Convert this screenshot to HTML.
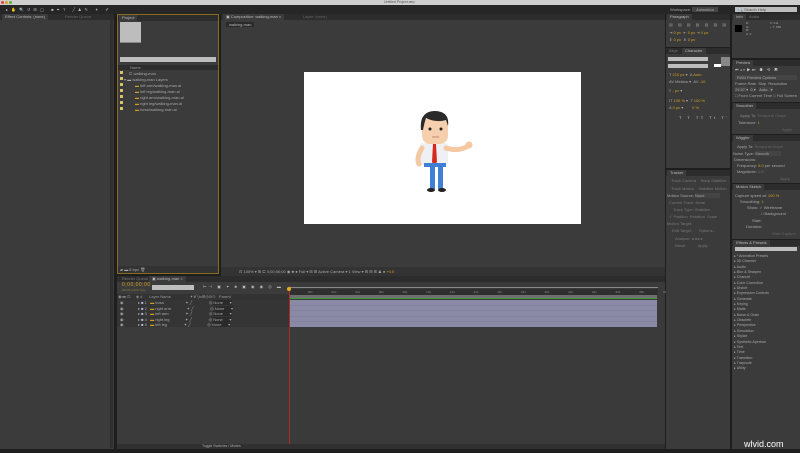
<!DOCTYPE html>
<html><head><meta charset="utf-8"><style>
*{margin:0;padding:0;box-sizing:border-box}
body{width:800px;height:453px;background:#1e1e1e;position:relative;overflow:hidden;font-family:"Liberation Sans",sans-serif;font-size:4px;color:#a8a8a8}
div{position:absolute}
.p{background:#3b3b3b}
.h{background:#2c2c2c;height:6px;left:0;right:0;top:0}
.tab{top:0;height:6px;background:#3b3b3b;padding:1px 3px;color:#bbb;white-space:nowrap;line-height:4px}
.t{white-space:nowrap;line-height:5px}
.row{left:0;right:0;height:5px;line-height:5px;white-space:nowrap}
.y{color:#d4a020}
.bar{background:#8a89a6}
</style></head><body>
<!-- title bar -->
<div style="left:0;top:0;width:800px;height:5px;background:#cfcfcf"></div>
<div style="left:1px;top:1px;width:3px;height:3px;border-radius:50%;background:#e0443e"></div>
<div style="left:5px;top:1px;width:3px;height:3px;border-radius:50%;background:#dea123"></div>
<div style="left:9px;top:1px;width:3px;height:3px;border-radius:50%;background:#5fb042"></div>
<div class="t" style="left:384px;top:0;color:#555;font-size:3.5px;line-height:5px">Untitled Project.aep</div>
<!-- toolbar -->
<div style="left:0;top:5px;width:800px;height:9px;background:#262626"></div>
<div class="t" style="left:6px;top:7px;color:#bbb;letter-spacing:3px;font-size:4px">▸✋🔍↺⊞◯ ■✒T ╱♟✎ ✦ ✐</div>
<div class="t" style="left:670px;top:7px">Workspace: <span style="background:#444;padding:0 4px">Animation</span></div>
<div style="left:735px;top:7px;width:62px;height:5px;background:#bdbdbd;color:#555;padding-left:3px;line-height:5px">🔍 Search Help</div>

<!-- Left: Effect Controls -->
<div class="p" style="left:0;top:14px;width:114px;height:435px">
 <div class="h"></div><div class="tab" style="left:2px">Effect Controls: (none)</div><div class="t" style="left:65px;top:0;color:#666">Render Queue</div>
 <div style="left:110px;top:6px;width:3px;height:428px;background:#2f2f2f"></div>
</div>
<!-- Project -->
<div class="p" style="left:117px;top:14px;width:102px;height:260px;border:1px solid #8a6d1c">
 <div class="h"></div><div class="tab" style="left:1px">Project</div>
 <div style="left:2px;top:7px;width:21px;height:21px;background:#bdbdbd;border-bottom:1px solid #888"></div>
 <div style="left:2px;top:42px;width:96px;height:5px;background:#bdbdbd"></div>
 <div style="left:0;top:50px;width:100px;height:5px;background:#2d2d2d;color:#999;padding-left:12px;line-height:5px">Name</div>
 <div class="row" style="top:56px;padding-left:11px">⊏ walking-man</div>
 <div class="row" style="top:62px;padding-left:6px">▾ ▬ walking-man Layers</div>
 <div class="row" style="top:68px;padding-left:17px"><span class="y">▬</span> left arm/walking-man.ai</div>
 <div class="row" style="top:74px;padding-left:17px"><span class="y">▬</span> left leg/walking-man.ai</div>
 <div class="row" style="top:80px;padding-left:17px"><span class="y">▬</span> right arm/walking-man.ai</div>
 <div class="row" style="top:86px;padding-left:17px"><span class="y">▬</span> right leg/walking-man.ai</div>
 <div class="row" style="top:92px;padding-left:17px"><span class="y">▬</span> torso/walking-man.ai</div>
 <div style="left:2px;top:56px;width:3px;height:40px;background:repeating-linear-gradient(#d9c26a 0 3px,transparent 3px 6px)"></div>
 <div style="left:0;top:251px;width:100px;height:7px;background:#333"></div>
 <div class="t" style="left:2px;top:252px">▰ ▬ 8 bpc 🗑</div>
</div>
<!-- Composition -->
<div class="p" style="left:221px;top:14px;width:444px;height:262px">
 <div class="h"></div><div class="tab" style="left:2px">▣ Composition: walking-man ×</div><div class="t" style="left:82px;top:0;color:#666">Layer: (none)</div>
 <div style="left:5px;top:8px;height:5px;background:#2a2a2a;padding:0 3px;line-height:5px;color:#bbb">walking-man</div>
 <div style="left:83px;top:58px;width:277px;height:152px;background:#fff"></div>
 <div style="left:0;top:253px;width:444px;height:9px;background:#333"></div>
 <div class="t" style="left:18px;top:255px">⊡ 100% ▾ ⊞ ⊏ 0;00;00;00 ◉ ♣ ● Full ▾ ⊞ ⊞ Active Camera ▾ 1 View ▾ ⊞ ⊞ ⊞ ♟ ● <span class="y">+0.0</span></div>
</div>
<!-- character -->
<svg style="position:absolute;left:410px;top:108px" width="70" height="88" viewBox="0 0 70 88">
 <rect x="10" y="35" width="28" height="22" rx="3" fill="#eef0f4"/>
 <polygon points="23,36 26,36 27,54 24,57 22,54" fill="#d42b1e"/>
 <path d="M36 40 Q48 44 58 38" stroke="#f4c8a3" stroke-width="5" fill="none" stroke-linecap="round"/>
 <circle cx="59" cy="37" r="3.5" fill="#f4c8a3"/>
 <path d="M12 40 Q6 50 9 56" stroke="#f4c8a3" stroke-width="5" fill="none" stroke-linecap="round"/>
 <rect x="20" y="57" width="5" height="24" fill="#3f7fd6"/><rect x="28" y="57" width="5" height="24" fill="#3f7fd6"/>
 <rect x="14" y="55" width="22" height="4" fill="#3f7fd6"/>
 <ellipse cx="21" cy="82" rx="4" ry="2" fill="#222"/><ellipse cx="32" cy="82" rx="4" ry="2" fill="#222"/>
 <rect x="12" y="10" width="26" height="26" rx="8" fill="#f6d0ae"/>
 <path d="M11 22 Q9 4 24 3 Q40 3 38 18 L36 12 Q26 15 16 10 Q14 16 13 22Z" fill="#2a2a2a"/>
 <circle cx="20" cy="21" r="1.5" fill="#222"/><circle cx="31" cy="21" r="1.5" fill="#222"/>
 <line x1="22" y1="29" x2="29" y2="29" stroke="#b07a60" stroke-width="0.8"/>
</svg>

<!-- Timeline -->
<div class="p" style="left:117px;top:276px;width:548px;height:173px">
 <div class="h"></div><div class="tab" style="left:2px;color:#777;background:#2c2c2c">Render Queue</div><div class="tab" style="left:32px">▣ walking-man ×</div>
 <div class="t y" style="left:5px;top:7px;font-size:5px;line-height:5px;letter-spacing:.5px">0;00;00;00</div>
 <div class="t" style="left:5px;top:12px;color:#8a7a40;font-size:3px">00000 (29.97 fps)</div>
 <div style="left:35px;top:9px;width:42px;height:5px;background:#bdbdbd"></div>
 <div class="t" style="left:86px;top:8px;color:#bbb;letter-spacing:2px">⊢⊣ ▣ ✦ ♣ ▣ ◉ ◉ ◎ ▬</div>
 <div style="left:0;top:18px;width:172px;height:6px;background:#333;line-height:6px;white-space:nowrap;color:#999">&nbsp;◉◂● ⊡ &nbsp;&nbsp;&nbsp;&nbsp;◈ # &nbsp;&nbsp;&nbsp;&nbsp;&nbsp;Layer Name &nbsp;&nbsp;&nbsp;&nbsp;&nbsp;&nbsp;&nbsp;&nbsp;&nbsp;&nbsp;&nbsp;&nbsp;&nbsp;&nbsp;&nbsp;&nbsp;✦※╲fx⊞◎⊘⊙ &nbsp;&nbsp;Parent</div>
 <div style="left:0;top:24px;width:172px;height:27px;background:#353535"></div>
 <div class="row" style="top:24px;width:172px;padding-left:3px">◉ &nbsp;&nbsp;&nbsp;&nbsp;&nbsp;&nbsp;&nbsp;&nbsp;&nbsp;&nbsp;&nbsp;&nbsp;▸ <span style="color:#b8bfe8">■</span> 1 &nbsp;&nbsp;<span class="y">▬</span> torso &nbsp;&nbsp;&nbsp;&nbsp;&nbsp;&nbsp;&nbsp;&nbsp;&nbsp;&nbsp;&nbsp;&nbsp;&nbsp;&nbsp;&nbsp;&nbsp;&nbsp;&nbsp;✦ ╱ &nbsp;&nbsp;&nbsp;&nbsp;&nbsp;&nbsp;&nbsp;&nbsp;&nbsp;&nbsp;&nbsp;&nbsp;&nbsp;&nbsp;◎ <span style="background:#2a2a2a">None &nbsp;&nbsp;&nbsp;&nbsp;&nbsp;▾</span></div>
 <div class="row" style="top:29.5px;width:172px;padding-left:3px">◉ &nbsp;&nbsp;&nbsp;&nbsp;&nbsp;&nbsp;&nbsp;&nbsp;&nbsp;&nbsp;&nbsp;&nbsp;▸ <span style="color:#b8bfe8">■</span> 2 &nbsp;&nbsp;<span class="y">▬</span> right arm &nbsp;&nbsp;&nbsp;&nbsp;&nbsp;&nbsp;&nbsp;&nbsp;&nbsp;&nbsp;&nbsp;&nbsp;&nbsp;✦ ╱ &nbsp;&nbsp;&nbsp;&nbsp;&nbsp;&nbsp;&nbsp;&nbsp;&nbsp;&nbsp;&nbsp;&nbsp;&nbsp;&nbsp;◎ <span style="background:#2a2a2a">None &nbsp;&nbsp;&nbsp;&nbsp;&nbsp;▾</span></div>
 <div class="row" style="top:35px;width:172px;padding-left:3px">◉ &nbsp;&nbsp;&nbsp;&nbsp;&nbsp;&nbsp;&nbsp;&nbsp;&nbsp;&nbsp;&nbsp;&nbsp;▸ <span style="color:#b8bfe8">■</span> 3 &nbsp;&nbsp;<span class="y">▬</span> left arm &nbsp;&nbsp;&nbsp;&nbsp;&nbsp;&nbsp;&nbsp;&nbsp;&nbsp;&nbsp;&nbsp;&nbsp;&nbsp;&nbsp;✦ ╱ &nbsp;&nbsp;&nbsp;&nbsp;&nbsp;&nbsp;&nbsp;&nbsp;&nbsp;&nbsp;&nbsp;&nbsp;&nbsp;&nbsp;◎ <span style="background:#2a2a2a">None &nbsp;&nbsp;&nbsp;&nbsp;&nbsp;▾</span></div>
 <div class="row" style="top:40.5px;width:172px;padding-left:3px">◉ &nbsp;&nbsp;&nbsp;&nbsp;&nbsp;&nbsp;&nbsp;&nbsp;&nbsp;&nbsp;&nbsp;&nbsp;▸ <span style="color:#b8bfe8">■</span> 4 &nbsp;&nbsp;<span class="y">▬</span> right leg &nbsp;&nbsp;&nbsp;&nbsp;&nbsp;&nbsp;&nbsp;&nbsp;&nbsp;&nbsp;&nbsp;&nbsp;&nbsp;✦ ╱ &nbsp;&nbsp;&nbsp;&nbsp;&nbsp;&nbsp;&nbsp;&nbsp;&nbsp;&nbsp;&nbsp;&nbsp;&nbsp;&nbsp;◎ <span style="background:#2a2a2a">None &nbsp;&nbsp;&nbsp;&nbsp;&nbsp;▾</span></div>
 <div class="row" style="top:46px;width:172px;padding-left:3px">◉ &nbsp;&nbsp;&nbsp;&nbsp;&nbsp;&nbsp;&nbsp;&nbsp;&nbsp;&nbsp;&nbsp;&nbsp;▸ <span style="color:#b8bfe8">■</span> 5 &nbsp;&nbsp;<span class="y">▬</span> left leg &nbsp;&nbsp;&nbsp;&nbsp;&nbsp;&nbsp;&nbsp;&nbsp;&nbsp;&nbsp;&nbsp;&nbsp;&nbsp;&nbsp;✦ ╱ &nbsp;&nbsp;&nbsp;&nbsp;&nbsp;&nbsp;&nbsp;&nbsp;&nbsp;&nbsp;&nbsp;&nbsp;&nbsp;&nbsp;◎ <span style="background:#2a2a2a">None &nbsp;&nbsp;&nbsp;&nbsp;&nbsp;▾</span></div>
 <!-- track -->
 <div style="left:172px;top:6px;width:376px;height:167px;background:#3a3a3a"></div>
 <div style="left:172px;top:11px;width:369px;height:1px;background:#888"></div>
 <div style="left:172px;top:13px;width:369px;height:6px;background:#2f2f2f;color:#888;font-size:3px;line-height:6px;white-space:nowrap;word-spacing:18px">&nbsp;00s 02s 04s 06s 08s 10s 12s 14s 16s 18s 20s 22s 24s 26s 28s 30s</div>
 <div style="left:172px;top:19px;width:368px;height:4px;background:#6f6f6f;border-bottom:1px solid #3d9a3d"></div>
 <div class="bar" style="left:172px;top:24px;width:368px;height:27px;background:repeating-linear-gradient(#8a89a6 0 5px,#7a7996 5px 5.5px)"></div>
 <div style="left:172px;top:10px;width:1px;height:163px;background:#b02a2a"></div>
 <div style="left:170px;top:11px;width:4px;height:4px;background:#e0b020;border-radius:50%"></div>
 <div style="left:0;top:168px;width:548px;height:5px;background:#303030"></div>
 <div class="t" style="left:85px;top:168px;font-size:3.5px">Toggle Switches / Modes</div>
</div>

<!-- Right column 1 -->
<div class="p" style="left:666px;top:14px;width:64px;height:33px">
 <div class="h"></div><div class="tab" style="left:1px">Paragraph</div>
 <div class="t" style="left:3px;top:8px;letter-spacing:2px;color:#999">▤ ▤ ▤ ▤ ▤ ▤ ▤</div>
 <div class="t" style="left:3px;top:16px">⇥ <span class="y">0 px</span> &nbsp;⇤ <span class="y">0 px</span> ⇥ <span class="y">0 px</span></div>
 <div class="t" style="left:3px;top:23px">⇞ <span class="y">0 px</span> &nbsp;⇟ <span class="y">0 px</span></div>
</div>
<div class="p" style="left:666px;top:48px;width:64px;height:120px">
 <div class="h"></div><div class="tab" style="left:0;background:#2c2c2c;color:#777">Align</div><div class="tab" style="left:16px">Character</div>
 <div style="left:2px;top:9px;width:40px;height:4px;background:#bdbdbd"></div>
 <div style="left:2px;top:16px;width:40px;height:4px;background:#bdbdbd"></div>
 <div style="left:55px;top:9px;width:9px;height:9px;background:#888"></div>
 <div style="left:48px;top:16px;width:7px;height:3px;background:#fff"></div>
 <div class="t" style="left:3px;top:24px">T <span class="y">210 px</span> ▾ &nbsp;A <span class="y">Auto</span></div>
 <div class="t" style="left:3px;top:31px">AV Metrics ▾ &nbsp;AV <span class="y">-10</span></div>
 <div class="t" style="left:3px;top:40px">≡ <span class="y">- px</span> ▾</div>
 <div class="t" style="left:3px;top:50px">IT <span class="y">100 %</span> ▾ &nbsp;T <span class="y">100 %</span></div>
 <div class="t" style="left:3px;top:57px">A <span class="y">0 px</span> ▾ &nbsp;&nbsp;&nbsp;&nbsp;&nbsp;&nbsp;&nbsp;<span class="y">0 %</span></div>
 <div class="t" style="left:13px;top:67px;color:#ccc;letter-spacing:2.5px">T T TT Tt T' T,</div>
</div>
<div class="p" style="left:666px;top:170px;width:64px;height:279px">
 <div class="h"></div><div class="tab" style="left:1px">Tracker</div>
 <div class="t" style="left:5px;top:8px;color:#777">Track Camera &nbsp;&nbsp;&nbsp;Warp Stabilize</div>
 <div class="t" style="left:5px;top:16px;color:#777">Track Motion &nbsp;&nbsp;&nbsp;Stabilize Motion</div>
 <div class="t" style="left:1px;top:23px">Motion Source: <span style="background:#444;padding-right:15px">None</span></div>
 <div class="t" style="left:3px;top:30px;color:#777">Current Track: None</div>
 <div class="t" style="left:7px;top:37px;color:#777">Track Type: Stabilize</div>
 <div class="t" style="left:3px;top:44px;color:#777">✓ Position &nbsp;Rotation &nbsp;Scale</div>
 <div class="t" style="left:1px;top:51px;color:#777">Motion Target:</div>
 <div class="t" style="left:6px;top:58px;color:#777">Edit Target... &nbsp;&nbsp;&nbsp;Options...</div>
 <div class="t" style="left:9px;top:66px;color:#777">Analyze: ◂ ◂ ▸ ▸</div>
 <div class="t" style="left:9px;top:73px;color:#777">Reset &nbsp;&nbsp;&nbsp;&nbsp;&nbsp;&nbsp;&nbsp;&nbsp;&nbsp;&nbsp;Apply</div>
</div>

<!-- Right column 2 -->
<div class="p" style="left:732px;top:14px;width:68px;height:44px">
 <div class="h"></div><div class="tab" style="left:1px">Info</div><div class="t" style="left:17px;top:0;color:#777">Audio</div>
 <div style="left:3px;top:11px;width:7px;height:7px;background:#000"></div>
 <div class="t" style="left:14px;top:8px;font-size:3px;line-height:3.5px">R:<br>G:<br>B:<br>A: 0</div>
 <div class="t" style="left:38px;top:8px;font-size:3px;line-height:3.5px">X: 411<br>+ Y: 680</div>
</div>
<div class="p" style="left:732px;top:60px;width:68px;height:42px">
 <div class="h"></div><div class="tab" style="left:1px">Preview</div>
 <div class="t" style="left:3px;top:7px;letter-spacing:1.5px;color:#ccc">⏮◂▸▶⏭ ◉ ⟲ ▣</div>
 <div style="left:3px;top:15px;width:62px;height:5px;background:#444;line-height:5px;padding-left:2px">RAM Preview Options</div>
 <div class="t" style="left:3px;top:21px">Frame Rate &nbsp;Skip &nbsp;Resolution</div>
 <div class="t" style="left:3px;top:27px"><span style="background:#444">29.97 ▾</span> &nbsp;<span style="background:#444">0 ▾</span> &nbsp;&nbsp;<span style="background:#444">Auto &nbsp;&nbsp;▾</span></div>
 <div class="t" style="left:3px;top:33px">□ From Current Time □ Full Screen</div>
</div>
<div class="p" style="left:732px;top:103px;width:68px;height:31px">
 <div class="h"></div><div class="tab" style="left:1px">Smoother</div>
 <div class="t" style="left:8px;top:10px;color:#888">Apply To: <span style="color:#666">Temporal Graph</span></div>
 <div class="t" style="left:6px;top:17px">Tolerance: <span class="y">1</span></div>
 <div class="t" style="left:50px;top:24px;color:#666">Apply</div>
</div>
<div class="p" style="left:732px;top:135px;width:68px;height:48px">
 <div class="h"></div><div class="tab" style="left:1px">Wiggler</div>
 <div class="t" style="left:5px;top:9px">Apply To: <span style="color:#666">Temporal Graph</span></div>
 <div class="t" style="left:1px;top:16px">Noise Type: <span style="background:#444;padding-right:12px">Smooth</span></div>
 <div class="t" style="left:2px;top:22px">Dimensions:</div>
 <div class="t" style="left:5px;top:28px">Frequency: <span class="y">5.0</span> per second</div>
 <div class="t" style="left:5px;top:34px">Magnitude: <span style="color:#777">1.0</span></div>
 <div class="t" style="left:48px;top:41px;color:#666">Apply</div>
</div>
<div class="p" style="left:732px;top:184px;width:68px;height:55px">
 <div class="h"></div><div class="tab" style="left:1px">Motion Sketch</div>
 <div class="t" style="left:3px;top:9px">Capture speed at: <span class="y">100 %</span></div>
 <div class="t" style="left:8px;top:15px">Smoothing: <span class="y">1</span></div>
 <div class="t" style="left:15px;top:21px">Show: ✓ Wireframe</div>
 <div class="t" style="left:29px;top:27px">□ Background</div>
 <div class="t" style="left:20px;top:34px">Start:</div>
 <div class="t" style="left:14px;top:40px">Duration:</div>
 <div class="t" style="left:40px;top:47px;color:#666">Start Capture</div>
</div>
<div class="p" style="left:732px;top:240px;width:68px;height:209px">
 <div class="h"></div><div class="tab" style="left:1px">Effects &amp; Presets</div>
 <div style="left:3px;top:7px;width:62px;height:4px;background:#bdbdbd"></div>
 <div class="t" style="left:2px;top:14px;line-height:5.35px;font-size:3.6px">▸ * Animation Presets<br>▸ 3D Channel<br>▸ Audio<br>▸ Blur &amp; Sharpen<br>▸ Channel<br>▸ Color Correction<br>▸ Distort<br>▸ Expression Controls<br>▸ Generate<br>▸ Keying<br>▸ Matte<br>▸ Noise &amp; Grain<br>▸ Obsolete<br>▸ Perspective<br>▸ Simulation<br>▸ Stylize<br>▸ Synthetic Aperture<br>▸ Text<br>▸ Time<br>▸ Transition<br>▸ Trapcode<br>▸ Utility</div>
</div>
<div class="t" style="left:744px;top:439px;color:#fff;font-size:9px;line-height:10px">wlvid.com</div>
</body></html>
